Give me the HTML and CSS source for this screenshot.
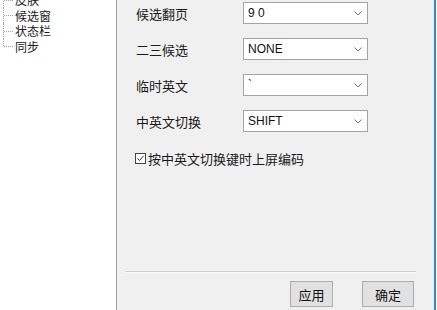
FILE: index.html
```html
<!DOCTYPE html>
<html lang="zh-CN">
<head>
  <meta charset="UTF-8" />
  <title>设置</title>
  <link rel="stylesheet" href="styles.css">
</head>
<body>

<div class="tree">
  <ul class="tree-list">
    <li>皮肤</li>
    <li>候选窗</li>
    <li>状态栏</li>
    <li>同步</li>
  </ul>
</div>

<div class="panel">
  <div class="form">
    <label class="form-label">候选翻页</label>
    <div class="combo"><span class="combo-text">9 0</span><svg class="chevron" width="8" height="5" viewBox="0 0 8 5"><polyline points="0.5,0.5 4,4 7.5,0.5" /></svg></div>

    <label class="form-label">二三候选</label>
    <div class="combo"><span class="combo-text">NONE</span><svg class="chevron" width="8" height="5" viewBox="0 0 8 5"><polyline points="0.5,0.5 4,4 7.5,0.5" /></svg></div>

    <label class="form-label">临时英文</label>
    <div class="combo"><span class="combo-text">`</span><svg class="chevron" width="8" height="5" viewBox="0 0 8 5"><polyline points="0.5,0.5 4,4 7.5,0.5" /></svg></div>

    <label class="form-label">中英文切换</label>
    <div class="combo"><span class="combo-text">SHIFT</span><svg class="chevron" width="8" height="5" viewBox="0 0 8 5"><polyline points="0.5,0.5 4,4 7.5,0.5" /></svg></div>
  </div>

  <div class="check-row">
    <svg class="checkbox" width="11" height="11" viewBox="0 0 11 11">
      <rect x="0.5" y="0.5" width="10" height="10" fill="#fff" stroke="#444" />
      <polyline points="2.5,5.5 4.5,7.5 8.5,3" fill="none" stroke="#333" stroke-width="1" />
    </svg>
    <span>按中英文切换键时上屏编码</span>
  </div>

  <div class="footer">
    <div class="separator"></div>
    <div class="buttons">
      <button class="btn btn-apply">应用</button>
      <button class="btn btn-ok">确定</button>
    </div>
  </div>
</div>

</body>
</html>
```

FILE: styles.css
```css
:root {
  --panel-bg: #f0f0f0;
  --line: #a0a0a0;
  --accent: #2b88d8;
  --text: #1a1a1a;
}

html, body {
  margin: 0;
  height: 100%;
}

body {
  display: flex;
  font-family: "Noto Sans CJK SC", sans-serif;
  font-size: 13px;
  color: var(--text);
  background: #fafafa;
  overflow: hidden;
}

/* left navigation tree */
.tree {
  width: 116px;
  background: #fff;
  border-right: 1px solid var(--line);
  overflow: hidden;
}

.tree-list {
  list-style: none;
  margin: -8px 0 0 0;
  padding: 0 0 0 15px;
  font-size: 12px;
}

.tree-list li {
  position: relative;
  height: 15.5px;
  line-height: 15.5px;
  white-space: nowrap;
}

.tree-list li::before {
  content: "";
  position: absolute;
  left: -11px;
  top: 50%;
  width: 9px;
  border-top: 1px dotted var(--line);
}

.tree-list li::after {
  content: "";
  position: absolute;
  left: -12px;
  top: 0;
  height: 100%;
  border-left: 1px dotted var(--line);
}

.tree-list li:last-child::after {
  height: 50%;
}

/* right settings panel */
.panel {
  width: 317px;
  background: var(--panel-bg);
  border-right: 2px solid var(--accent);
  margin-right: 1px;
  display: flex;
  flex-direction: column;
}

.form {
  display: grid;
  grid-template-columns: 107px 125px;
  grid-auto-rows: 22px;
  row-gap: 14px;
  padding: 2px 0 0 19px;
  align-items: center;
}

.form-label {
  line-height: 22px;
  padding-top: 2px;
}

.combo {
  height: 22px;
  box-sizing: border-box;
  background: #fff;
  border: 1px solid #a3a3a3;
  display: flex;
  align-items: center;
  justify-content: space-between;
  padding: 0 5px 0 4px;
  font-family: "Liberation Sans", Arial, sans-serif;
  font-size: 12px;
  color: #111;
}

.chevron polyline {
  fill: none;
  stroke: #707070;
  stroke-width: 1;
}

.check-row {
  display: flex;
  align-items: center;
  gap: 2px;
  margin: 17px 0 0 18px;
}

.footer {
  margin-top: auto;
  padding-bottom: 3px;
}

.separator {
  margin: 0 18px 0 8px;
  border-top: 1px solid #cfcfcf;
  border-bottom: 1px solid #fbfbfb;
}

.buttons {
  display: flex;
  justify-content: flex-end;
  gap: 29px;
  padding: 8px 20px 0 0;
}

.btn {
  height: 26px;
  background: #e1e1e1;
  border: 1px solid #adadad;
  font-family: "Noto Sans CJK SC", sans-serif;
  font-size: 13px;
  color: #111;
  padding: 0;
}

.btn-apply {
  width: 43px;
}

.btn-ok {
  width: 52px;
}
```
